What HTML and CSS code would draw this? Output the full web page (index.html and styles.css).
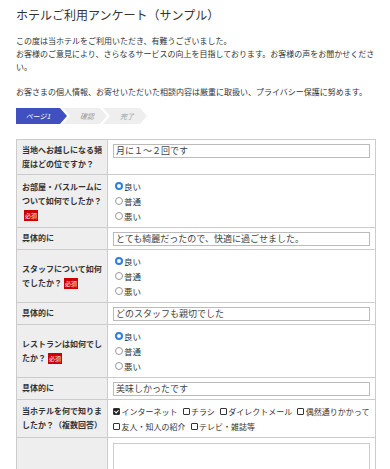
FILE: index.html
```html
<!doctype html>
<html lang="ja">

<head>
    <meta charset="utf-8">
    <meta name="viewport" content="width=device-width, initial-scale=1.0">
    <title>ホテルご利用アンケート（サンプル）</title>
    <link rel="stylesheet" href="styles.css">
</head>

<body>
    <h1 class="title">ホテルご利用アンケート（サンプル）</h1>

    <div class="intro">
        <p>この度は当ホテルをご利用いただき、有難うございました。<br>お客様のご意見により、さらなるサービスの向上を目指しております。お客様の声をお聞かせください。</p>
        <p>お客さまの個人情報、お寄せいただいた相談内容は厳重に取扱い、プライバシー保護に努めます。</p>
    </div>

    <ol class="steps">
        <li class="step current">ページ1</li>
        <li class="step">確認</li>
        <li class="step">完了</li>
    </ol>

    <form class="survey">
        <table class="survey-table">
            <tr>
                <th>当地へお越しになる頻度はどの位ですか？</th>
                <td><input type="text" class="text-input" value="月に１～２回です"></td>
            </tr>
            <tr>
                <th>お部屋・バスルームについて如何でしたか？<span class="required">必須</span></th>
                <td>
                    <label class="choice"><input type="radio" name="room" checked>良い</label>
                    <label class="choice"><input type="radio" name="room">普通</label>
                    <label class="choice"><input type="radio" name="room">悪い</label>
                </td>
            </tr>
            <tr>
                <th>具体的に</th>
                <td><input type="text" class="text-input" value="とても綺麗だったので、快適に過ごせました。"></td>
            </tr>
            <tr>
                <th>スタッフについて如何でしたか？<span class="required">必須</span></th>
                <td>
                    <label class="choice"><input type="radio" name="staff" checked>良い</label>
                    <label class="choice"><input type="radio" name="staff">普通</label>
                    <label class="choice"><input type="radio" name="staff">悪い</label>
                </td>
            </tr>
            <tr>
                <th>具体的に</th>
                <td><input type="text" class="text-input" value="どのスタッフも親切でした"></td>
            </tr>
            <tr>
                <th>レストランは如何でしたか？<span class="required">必須</span></th>
                <td>
                    <label class="choice"><input type="radio" name="restaurant" checked>良い</label>
                    <label class="choice"><input type="radio" name="restaurant">普通</label>
                    <label class="choice"><input type="radio" name="restaurant">悪い</label>
                </td>
            </tr>
            <tr>
                <th>具体的に</th>
                <td><input type="text" class="text-input" value="美味しかったです"></td>
            </tr>
            <tr>
                <th>当ホテルを何で知りましたか？（複数回答）</th>
                <td>
                    <div class="checks">
                        <label class="check"><span class="box on"></span>インターネット</label>
                        <label class="check"><span class="box"></span>チラシ</label>
                        <label class="check"><span class="box"></span>ダイレクトメール</label>
                        <label class="check"><span class="box"></span>偶然通りかかって</label>
                        <label class="check"><span class="box"></span>友人・知人の紹介</label>
                        <label class="check"><span class="box"></span>テレビ・雑誌等</label>
                    </div>
                </td>
            </tr>
            <tr>
                <th></th>
                <td><textarea class="text-area"></textarea></td>
            </tr>
        </table>
    </form>
</body>

</html>
```

FILE: styles.css
```css
/* survey page, small print */
html, body {
    margin: 0;
    padding: 0;
    background: #ffffff;
    color: #333333;
    font-family: "Noto Sans CJK JP", sans-serif;
}

body {
    padding: 6px 14px 20px 16px;
}

.title {
    margin: 0;
    font-size: 12px;
    line-height: 18px;
    font-weight: normal;
}

.intro {
    margin-top: 11px;
    font-size: 8px;
    line-height: 12.8px;
}

.intro p { margin: 0 0 12.8px 0; }
.intro p:last-child { margin-bottom: 0; }

/* step indicator */
.steps {
    list-style: none;
    margin: 9px 0 0 0;
    padding: 0;
    display: flex;
}

.step {
    height: 16px;
    width: 44px;
    margin-left: -4px;
    padding-left: 4px;
    box-sizing: border-box;
    background: #eeeeee;
    color: #999999;
    font-size: 7px;
    font-style: italic;
    line-height: 16px;
    text-align: center;
    clip-path: polygon(0 0, 37px 0, 44px 50%, 37px 100%, 0 100%, 7px 50%);
}

.step.current {
    width: 51px;
    margin-left: 0;
    padding: 0 7px 0 0;
    background: #4050c0;
    color: #ffffff;
    clip-path: polygon(0 0, 44px 0, 51px 50%, 44px 100%, 0 100%);
}

/* table */
.survey { margin-top: 15px; }

.survey-table {
    width: 100%;
    border-collapse: collapse;
    border: 1px solid #cccccc;
}

.survey-table th,
.survey-table td {
    border: 1px solid #cccccc;
}

.survey-table th {
    width: 80px;
    padding: 3px 5px;
    background: #eeeeee;
    font-size: 8px;
    line-height: 14px;
    font-weight: bold;
    text-align: left;
    vertical-align: middle;
    color: #333333;
}

.survey-table td {
    padding: 4px 5px 3px 5px;
    vertical-align: top;
    font-size: 8px;
    line-height: 15px;
}

.required {
    display: inline-block;
    margin-left: 2px;
    padding: 0 1px;
    background: #cc0000;
    color: #ffffff;
    font-size: 6px;
    line-height: 11px;
    font-weight: normal;
    vertical-align: middle;
}

.text-input {
    display: block;
    width: 100%;
    height: 14px;
    box-sizing: border-box;
    margin: 0;
    padding: 0 2px;
    border: 1px solid #bbbbbb;
    font-family: inherit;
    font-size: 9px;
    color: #444444;
    outline: none;
}

.choice {
    display: flex;
    align-items: center;
    height: 15px;
    font-size: 8.5px;
    color: #333333;
}

.choice input {
    appearance: none;
    width: 8px;
    height: 8px;
    margin: 0 1px 0 2px;
    border: 1px solid #999999;
    border-radius: 50%;
    background: #ffffff;
}

.choice input:checked {
    border: 2.5px solid #2f7ee0;
}

.checks {
    display: flex;
    flex-wrap: wrap;
    column-gap: 5px;
    line-height: 15px;
}

.check {
    display: flex;
    align-items: center;
    white-space: nowrap;
}

.box {
    position: relative;
    width: 7px;
    height: 7px;
    box-sizing: border-box;
    margin-right: 1.5px;
    border: 1px solid #333333;
    border-radius: 1px;
}

.box.on { background: #222222; }

.box.on::after {
    content: "";
    position: absolute;
    left: 1px;
    top: 0;
    width: 2px;
    height: 3px;
    border-right: 1px solid #ffffff;
    border-bottom: 1px solid #ffffff;
    transform: rotate(45deg);
}

.text-area {
    display: block;
    width: 100%;
    height: 70px;
    box-sizing: border-box;
    margin: 1px 0 0 0;
    border: 1px solid #cccccc;
    resize: none;
}
```
